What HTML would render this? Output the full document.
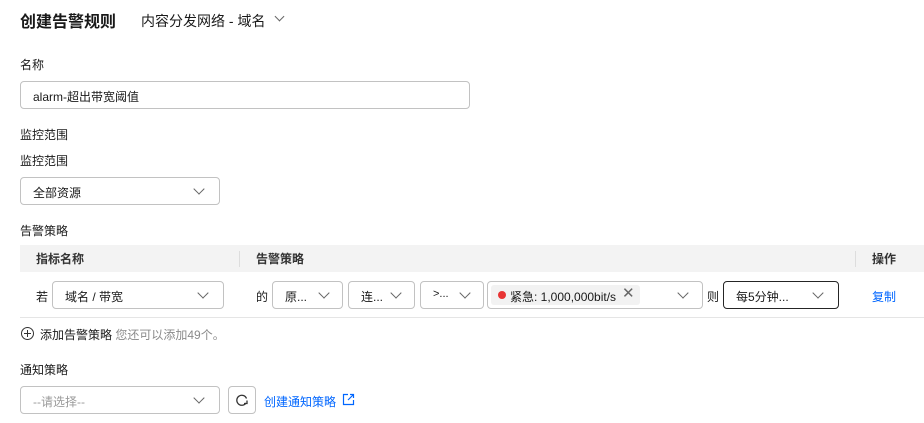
<!DOCTYPE html>
<html><head><meta charset="utf-8"><style>
*{margin:0;padding:0;box-sizing:border-box}
body{width:924px;height:423px;background:#fff;font-family:"Liberation Sans","Noto Sans CJK SC",sans-serif;color:#191919;font-size:12px;position:relative;overflow:hidden}
.a{position:absolute;white-space:nowrap}
.box{position:absolute;border:1px solid #c2c2c2;border-radius:4px;background:#fff}
.chev{position:absolute;width:8px;height:8px;border-right:1.3px solid #666;border-bottom:1.3px solid #666;transform:rotate(45deg)}
.lbl{font-size:12px;color:#191919}
</style></head><body>
<div class="a" style="left:20px;top:8px;font-size:16px;font-weight:bold;">创建告警规则</div>
<div class="a" style="left:141px;top:11px;font-size:14px;">内容分发网络 - 域名</div>
<div class="chev" style="left:276px;top:13px;width:7px;height:7px"></div>

<div class="a lbl" style="left:20px;top:56px">名称</div>
<div class="box" style="left:20px;top:81px;width:450px;height:28px"></div>
<div class="a" style="left:33px;top:88px">alarm-超出带宽阈值</div>

<div class="a lbl" style="left:20px;top:126px">监控范围</div>
<div class="a lbl" style="left:20px;top:152px">监控范围</div>
<div class="box" style="left:20px;top:177px;width:200px;height:28px"></div>
<div class="a" style="left:33px;top:184px">全部资源</div>
<div class="chev" style="left:195px;top:185px"></div>

<div class="a lbl" style="left:20px;top:222px">告警策略</div>
<div class="a" style="left:20px;top:245px;width:904px;height:27px;background:#f3f3f3"></div>
<div class="a" style="left:36px;top:250px;font-weight:bold;color:#333">指标名称</div>
<div class="a" style="left:239px;top:251px;width:1px;height:16px;background:#ddd"></div>
<div class="a" style="left:256px;top:250px;font-weight:bold;color:#333">告警策略</div>
<div class="a" style="left:855px;top:251px;width:1px;height:16px;background:#ddd"></div>
<div class="a" style="left:872px;top:250px;font-weight:bold;color:#333">操作</div>
<div class="a" style="left:20px;top:317px;width:904px;height:1px;background:#e5e5e5"></div>

<div class="a" style="left:36px;top:288px">若</div>
<div class="box" style="left:52px;top:281px;width:172px;height:28px"></div>
<div class="a" style="left:65px;top:288px">域名 / 带宽</div>
<div class="chev" style="left:199px;top:289px"></div>
<div class="a" style="left:256px;top:288px">的</div>
<div class="box" style="left:272px;top:281px;width:71px;height:28px"></div>
<div class="a" style="left:285px;top:288px">原...</div>
<div class="chev" style="left:320px;top:289px"></div>
<div class="box" style="left:348px;top:281px;width:67px;height:28px"></div>
<div class="a" style="left:361px;top:288px">连...</div>
<div class="chev" style="left:392px;top:289px"></div>
<div class="box" style="left:420px;top:281px;width:64px;height:28px"></div>
<div class="a" style="left:433px;top:288px;font-size:11px">&gt;...</div>
<div class="chev" style="left:461px;top:289px"></div>
<div class="box" style="left:487px;top:281px;width:216px;height:28px"></div>
<div class="a" style="left:491px;top:285px;width:149px;height:20px;background:#f2f2f2;border-radius:3px"></div>
<div class="a" style="left:498px;top:291px;width:8px;height:8px;border-radius:50%;background:#e83535"></div>
<div class="a" style="left:510px;top:288px">紧急: 1,000,000bit/s</div>
<div class="a" style="left:622px;top:284px;font-size:15px;color:#666">✕</div>
<div class="chev" style="left:679px;top:289px"></div>
<div class="a" style="left:707px;top:288px">则</div>
<div class="box" style="left:723px;top:281px;width:116px;height:28px;border-color:#252525"></div>
<div class="a" style="left:736px;top:288px">每5分钟...</div>
<div class="chev" style="left:814px;top:289px"></div>
<div class="a" style="left:872px;top:288px;color:#0066ff">复制</div>

<div class="a" style="left:21px;top:327px;width:13px;height:13px;border:1.2px solid #333;border-radius:50%"></div>
<div class="a" style="left:24px;top:333px;width:7px;height:1.2px;background:#333"></div>
<div class="a" style="left:27px;top:330px;width:1.2px;height:7px;background:#333"></div>
<div class="a" style="left:40px;top:326px">添加告警策略 <span style="color:#8a8a8a">您还可以添加49个。</span></div>

<div class="a lbl" style="left:20px;top:361px">通知策略</div>
<div class="box" style="left:20px;top:386px;width:200px;height:28px"></div>
<div class="a" style="left:33px;top:393px;color:#9a9a9a">--请选择--</div>
<div class="chev" style="left:195px;top:394px"></div>
<div class="box" style="left:228px;top:386px;width:28px;height:28px"></div>
<svg class="a" style="left:234px;top:392px" width="16" height="16" viewBox="0 0 16 16"><path d="M12.5 6.5A5 5 0 1 0 12 11" fill="none" stroke="#333" stroke-width="1.3"/><path d="M10 11.5h3v-3" fill="none" stroke="#333" stroke-width="1.3"/></svg>
<div class="a" style="left:264px;top:393px;color:#0066ff">创建通知策略</div>
<svg class="a" style="left:342px;top:393px" width="13" height="13" viewBox="0 0 13 13"><path d="M6 1.5H1.5v10h10V7M8 1.5h3.5V5M11.5 1.5L6 7" fill="none" stroke="#0066ff" stroke-width="1.2"/></svg>
</body></html>
